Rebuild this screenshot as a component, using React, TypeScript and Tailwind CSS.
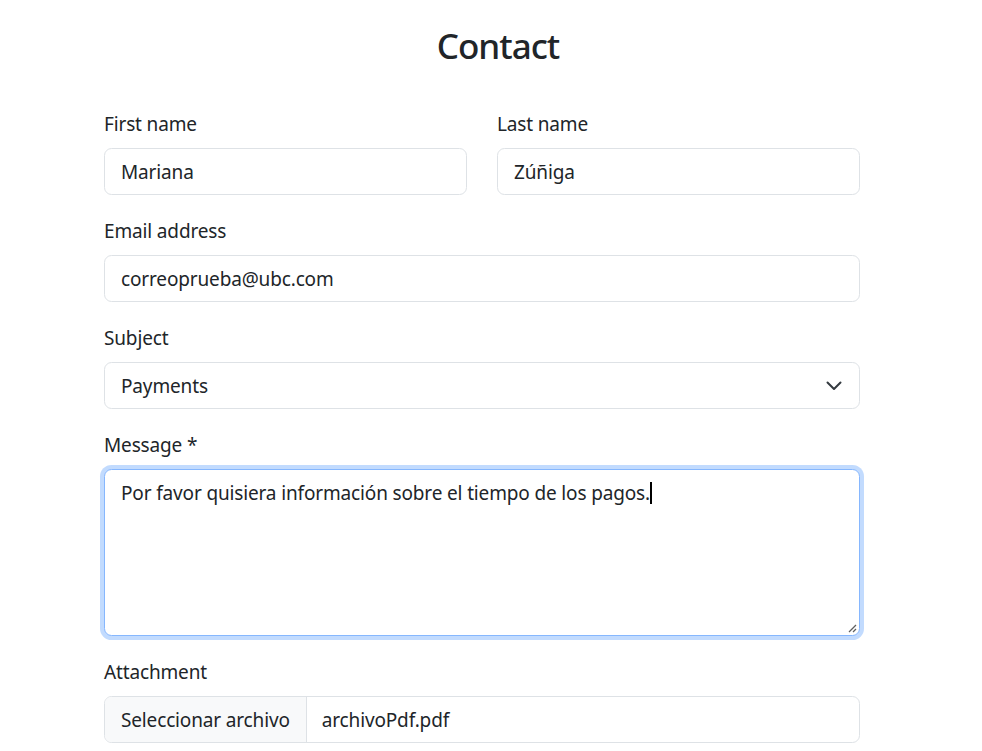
const Label = ({ children }: { children: React.ReactNode }) => (
    <label className="mb-[10px] block pt-[2px] text-[19px] leading-[28px] tracking-[-0.15px]">{children}</label>
)

const Field = ({ value }: { value: string }) => (
    <div className="flex h-[47px] items-center rounded-[7.5px] border border-[#dee2e6] bg-white px-[16px] text-[19px] leading-[30px] tracking-[-0.15px]">
        {value}
    </div>
)

const App = () => {
    return (
        <div
            className="min-h-screen bg-white text-[#212529]"
            style={{ fontFamily: '"Noto Sans", "Open Sans", sans-serif' }}
        >
            <div className="ml-[104px] w-[756px] pt-[22px]">
                <h2 className="pl-[32px] text-center text-[35px] font-medium leading-[48px] tracking-[-1px]">
                    Contact
                </h2>

                <div className="mt-[38px] flex flex-col gap-[20px]">
                    <div className="grid grid-cols-2 gap-[30px]">
                        <div>
                            <Label>First name</Label>
                            <Field value="Mariana" />
                        </div>
                        <div>
                            <Label>Last name</Label>
                            <Field value="Zúñiga" />
                        </div>
                    </div>

                    <div>
                        <Label>Email address</Label>
                        <Field value="correoprueba@ubc.com" />
                    </div>

                    <div>
                        <Label>Subject</Label>
                        <div className="flex h-[47px] items-center justify-between rounded-[7.5px] border border-[#dee2e6] bg-white pl-[16px] pr-[17px] text-[19px] leading-[30px] tracking-[-0.15px]">
                            <span>Payments</span>
                            {/* bootstrap select arrow */}
                            <svg width="16" height="10" viewBox="0 0 16 10" className="mt-[1px]">
                                <path d="M1.5 1.5 L8 8 L14.5 1.5" stroke="#343a40" strokeWidth="2" strokeLinecap="round" strokeLinejoin="round" fill="none" />
                            </svg>
                        </div>
                    </div>

                    <div>
                        <Label>Message *</Label>
                        <div className="relative h-[167px] rounded-[7.5px] border border-[#86b7fe] bg-white px-[16px] py-[8px] text-[19px] leading-[30px] tracking-[-0.15px] shadow-[0_0_0_4px_rgba(13,110,253,0.25)]">
                            Por favor quisiera información sobre el tiempo de los pagos.
                            <span className="inline-block h-[22px] w-[2px] translate-y-[4px] bg-black" />
                            <svg
                                className="absolute bottom-[2px] right-[2px]"
                                width="10"
                                height="10"
                                viewBox="0 0 10 10"
                            >
                                <path d="M9 2 L2 9 M9 6 L6 9" stroke="#5f5f5f" strokeWidth="1.3" fill="none" />
                            </svg>
                        </div>
                    </div>

                    <div>
                        <Label>Attachment</Label>
                        <div className="flex h-[47px] overflow-hidden rounded-[7.5px] border border-[#dee2e6] bg-white text-[19px] leading-[30px] tracking-[-0.15px]">
                            <div className="flex items-center border-r border-[#dee2e6] bg-[#f8f9fa] px-[16px]">
                                Seleccionar archivo
                            </div>
                            <div className="flex items-center px-[15px]">archivoPdf.pdf</div>
                        </div>
                    </div>
                </div>
            </div>
        </div>
    )
}

export default App
